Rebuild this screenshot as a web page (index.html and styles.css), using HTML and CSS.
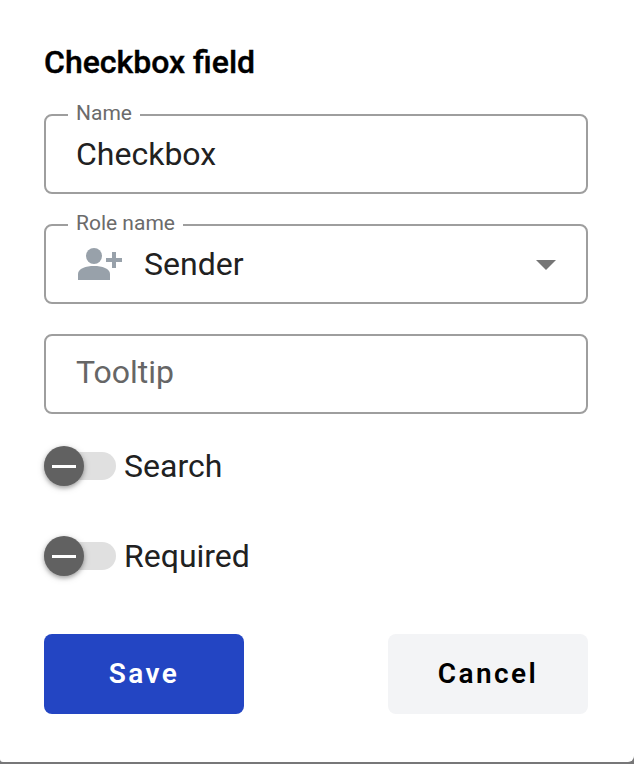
FILE: index.html
```html
<!DOCTYPE html>
<html lang="en">
<head>
<meta charset="utf-8">
<title>Checkbox field</title>
<link rel="stylesheet" href="styles.css">
</head>
<body>
<form class="dialog">
  <h1 class="title">Checkbox field</h1>
  <div class="field">
    <span class="label">Name</span>
    <span class="value">Checkbox</span>
  </div>
  <div class="field">
    <span class="label">Role name</span>
    <svg class="role-icon" width="44" height="32" viewBox="0 0 44 32" fill="#98a1aa"><circle cx="16" cy="8" r="8"/><path d="M0 32V26C0 20.500 8 18 16 18S32 20.500 32 26V32ZM34 4h4v6h6v4h-6v6h-4v-6h-6v-4h6z"/></svg>
    <span class="value">Sender</span>
    <svg class="arrow" width="20" height="10" viewBox="0 0 20 10" fill="#757575"><path d="M0 0h20L10 10z"/></svg>
  </div>
  <div class="field">
    <span class="placeholder">Tooltip</span>
  </div>
  <div class="toggle">
    <span class="track"><span class="thumb"></span></span>
    <span class="toggle-label">Search</span>
  </div>
  <div class="toggle">
    <span class="track"><span class="thumb"></span></span>
    <span class="toggle-label">Required</span>
  </div>
  <div class="actions">
    <button type="button" class="button primary">Save</button>
    <button type="button" class="button secondary">Cancel</button>
  </div>
</form>
</body>
</html>
```
FILE: styles.css
```css
* { box-sizing: border-box; }
body {
  margin: 0;
  height: 764px;
  overflow: hidden;
  background: #777778;
  font-family: Roboto, "Liberation Sans", sans-serif;
  color: #212121;
}
.dialog {
  height: 762px;
  padding: 42px 46px 0 44px;
  background: #fff;
  border-radius: 0 0 6px 3px;
}
.title {
  margin: 0 0 32px;
  height: 40px;
  line-height: 40px;
  font-size: 32px;
  font-weight: 500;
  -webkit-text-stroke: 0.4px #000;
  color: #000;
}
.field {
  position: relative;
  display: flex;
  align-items: center;
  height: 80px;
  margin-bottom: 30px;
  padding: 0 30px;
  border: 2px solid #9e9e9e;
  border-radius: 8px;
}
.label {
  position: absolute;
  left: 22px;
  top: -16px;
  padding: 0 8px;
  background: #fff;
  color: #6b6b6b;
  font-size: 21px;
  line-height: 26px;
}
.value, .placeholder, .toggle-label {
  font-size: 32px;
  line-height: 40px;
}
.placeholder { color: #666; margin-top: -4px; }
.role-icon { margin: 0 22px 0 2px; }
.arrow { margin: 2px 0 0 auto; }
.toggle {
  display: flex;
  align-items: center;
  height: 40px;
  margin: 32px 0 50px;
}
.toggle + .toggle { margin: 0 0 58px; }
.track {
  display: flex;
  align-items: center;
  width: 72px;
  height: 28px;
  margin-right: 8px;
  border-radius: 14px;
  background: #e0e0e0;
}
.thumb {
  display: flex;
  align-items: center;
  justify-content: center;
  width: 40px;
  height: 40px;
  border-radius: 50%;
  background: #616161;
  box-shadow: 0 2px 4px rgba(0, 0, 0, 0.3), 0 2px 8px rgba(0, 0, 0, 0.12);
}
.thumb::before {
  content: "";
  width: 24px;
  height: 3px;
  background: #fff;
}
.actions { display: flex; justify-content: space-between; }
.button {
  width: 200px;
  height: 80px;
  padding: 0;
  border: 0;
  border-radius: 8px;
  font: 600 28px/40px Roboto, sans-serif;
  letter-spacing: 2.4px;
}
.primary { background: #2345c3; color: #fff; }
.secondary { background: #f3f4f6; color: #000; }
```
